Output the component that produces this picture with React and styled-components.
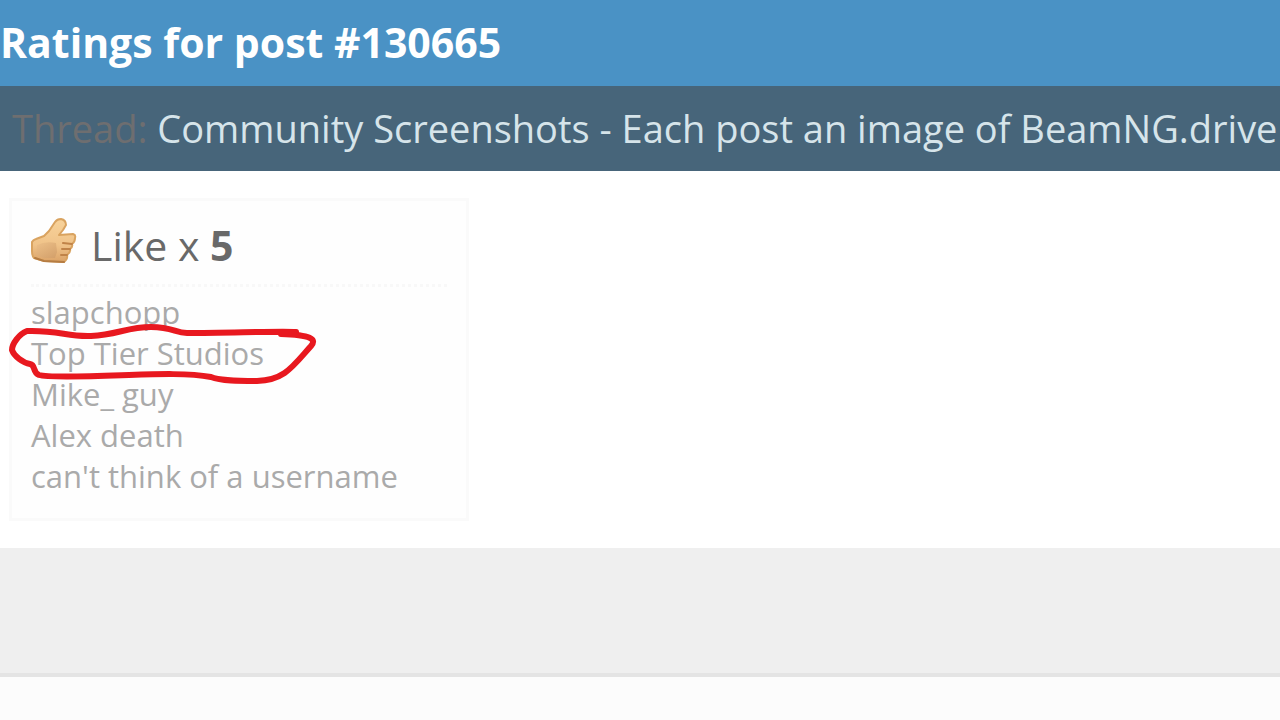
import React from 'react';
import styled, { createGlobalStyle } from 'styled-components';

const users = [
  { name: 'slapchopp' },
  { name: 'Top Tier Studios', circled: true },
  { name: 'Mike_ guy' },
  { name: 'Alex death' },
  { name: "can't think of a username" },
];

const ThumbIcon = () => (
  <Thumb viewBox="0 0 46 46" aria-hidden="true">
    <defs>
      <linearGradient id="skin" x1="0" y1="0" x2="0" y2="1">
        <stop offset="0" stopColor="#f8d39b" />
        <stop offset="0.6" stopColor="#f0c389" />
        <stop offset="1" stopColor="#dba368" />
      </linearGradient>
      <linearGradient id="palm" x1="0" y1="0" x2="1" y2="1">
        <stop offset="0" stopColor="#ecbf88" />
        <stop offset="1" stopColor="#cf9c68" />
      </linearGradient>
    </defs>
    <path
      d="M1 24 Q2 22 5 21 L13 18 L18 13 L24 4 Q26 1 30 1 Q35 2 35 7 L32 12 L28 17 L42 16 Q45 17 44 20 Q44 24 41 26 Q42 29 39 31 Q40 34 36 37 Q37 41 33 44 L13 43 L3 40 Q1 38 1 33 Z"
      fill="url(#skin)"
      stroke="#d9a360"
      strokeWidth="2"
      strokeLinejoin="round"
    />
    <path d="M6 27 Q14 23 25 25 L26 34 L24 40 L13 40 L5 37 Z" fill="url(#palm)" opacity="0.8" />
    <path
      d="M32 25 L41 26 M31 31 L39 31 M30 37 L36 37"
      fill="none"
      stroke="#c08348"
      strokeWidth="2"
      strokeLinecap="round"
    />
    <path d="M4 40 L13 43 L33 44" fill="none" stroke="#b57c42" strokeWidth="2" strokeLinecap="round" />
  </Thumb>
);

const Scribble = () => (
  <ScribbleSvg viewBox="0 0 310 64" aria-hidden="true">
    <path
      d="M287 10 C270 9 220 11 178 11 C166 11 164 5 142 5 C118 5 108 13 82 14 C58 15 50 8 18 9 C10 12 3 22 3 28 C5 34 14 41 21 42 C27 43 23 50 30 53 C40 56 90 54 120 53 C150 52 180 51 202 55 C212 59 230 59 248 59 C276 58 284 44 302 24 C308 17 302 13 272 12"
      fill="none"
      stroke="#e8181f"
      strokeWidth="6"
      strokeLinecap="round"
      strokeLinejoin="round"
    />
  </ScribbleSvg>
);

const App = () => (
  <>
    <GlobalStyle />
    <main>
      <Title>Ratings for post #130665</Title>
      <ThreadBar>
        Thread:{' '}
        <ThreadLink href="#thread">
          Community Screenshots - Each post an image of BeamNG.drive
        </ThreadLink>
      </ThreadBar>
      <Ratings>
        <Card>
          <CardHeading>
            <ThumbIcon />
            <span>Like x <strong>5</strong></span>
          </CardHeading>
          <UserList>
            {users.map(({ name, circled }) => (
              <User key={name}>
                <UserLink href="#member">{name}</UserLink>
                {circled && <Scribble />}
              </User>
            ))}
          </UserList>
        </Card>
      </Ratings>
      <Footer />
    </main>
  </>
);

export default App

const GlobalStyle = createGlobalStyle`
  body {
    margin: 0;
    background: #fcfcfc;
    font-family: "Open Sans", "Noto Sans", sans-serif;
    overflow: hidden;
  }
`;

const Title = styled.h1`
  margin: 0;
  padding-bottom: 2px;
  background: #4a92c5;
  color: #fff;
  font-size: 41px;
  font-weight: 700;
  line-height: 84px;
  white-space: nowrap;
`;

const ThreadBar = styled.div`
  padding-left: 12px;
  overflow: hidden;
  background: #47657a;
  color: #6e6e70;
  font-size: 38px;
  line-height: 85px;
  white-space: nowrap;
`;

const ThreadLink = styled.a`
  color: #d6e4ea;
  text-decoration: none;
`;

const Ratings = styled.section`
  display: flex;
  align-items: flex-start;
  padding: 27px 9px;
  background: #fff;
`;

const Card = styled.article`
  box-sizing: border-box;
  width: 460px;
  padding: 17px 19px 21px;
  border: 3px solid #fafafa;
  background: #fefefe;
`;

const CardHeading = styled.h2`
  display: flex;
  align-items: center;
  gap: 14px;
  margin: 0 0 5px;
  padding-bottom: 12px;
  border-bottom: 3px dotted #f8f8f8;
  color: #696969;
  font-size: 41px;
  font-weight: 400;
  line-height: 52px;
  white-space: nowrap;
`;

const Thumb = styled.svg`
  flex: none;
  width: 46px;
  height: 46px;
  margin-bottom: 8px;
`;

const UserList = styled.ul`
  margin: 0;
  padding: 0;
  font-size: 31px;
  line-height: 41px;
  list-style: none;
`;

const User = styled.li`
  position: relative;
`;

const UserLink = styled.a`
  color: #aaa;
  text-decoration: none;
  white-space: nowrap;
`;

/* hand drawn ring, lies over the name and its neighbours */
const ScribbleSvg = styled.svg`
  position: absolute;
  top: -11px;
  left: -22px;
  width: 310px;
  height: 64px;
  pointer-events: none;
`;

const Footer = styled.footer`
  height: 125px;
  border-bottom: 4px solid #e4e4e4;
  background: #efefef;
`;
